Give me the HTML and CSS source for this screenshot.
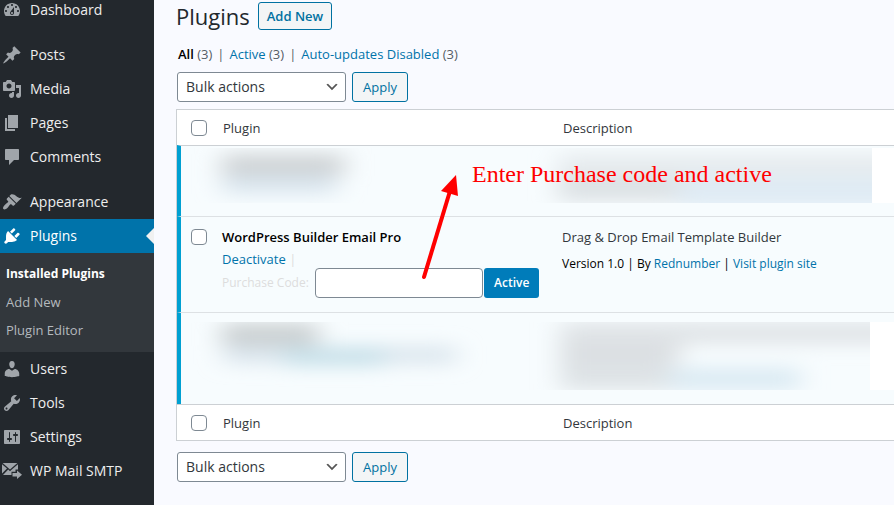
FILE: index.html
```html
<!DOCTYPE html>
<html lang="en">
<head>
<meta charset="utf-8">
<title>Plugins</title>
<link rel="stylesheet" href="styles.css">
</head>
<body>
<div class="admin">
  <nav class="sidebar" aria-label="Main menu">
    <ul class="menu">
      <li><a class="item" href="#"><svg class="icon" viewBox="0 0 20 20"><path d="M3.76 16h12.48c1.1-1.37 1.76-3.11 1.76-5 0-4.42-3.58-8-8-8s-8 3.58-8 8c0 1.89.66 3.63 1.76 5zM10 4c.55 0 1 .45 1 1s-.45 1-1 1-1-.45-1-1 .45-1 1-1zM6 6c.55 0 1 .45 1 1s-.45 1-1 1-1-.45-1-1 .45-1 1-1zm8 0c.55 0 1 .45 1 1s-.45 1-1 1-1-.45-1-1 .45-1 1-1zm-5.37 5.55L12 7v6c0 1.1-.9 2-2 2s-2-.9-2-2c0-.57.24-1.08.63-1.45zM4 10c.55 0 1 .45 1 1s-.45 1-1 1-1-.45-1-1 .45-1 1-1zm12 0c.55 0 1 .45 1 1s-.45 1-1 1-1-.45-1-1 .45-1 1-1zm-5 3c0-.55-.45-1-1-1s-1 .45-1 1 .45 1 1 1 1-.45 1-1z"/></svg>Dashboard</a></li>
      <li class="separator"></li>
      <li><a class="item" href="#"><svg class="icon" viewBox="0 0 20 20"><path d="M10.44 3.02l1.82-1.82 6.36 6.35-1.83 1.82c-1.05-.68-2.48-.57-3.41.36l-.75.75c-.92.93-1.04 2.35-.35 3.41l-1.83 1.82-2.41-2.41-2.8 2.79c-.42.42-3.38 2.71-3.8 2.29s1.86-3.39 2.28-3.81l2.79-2.79L4.1 9.36l1.83-1.82c1.05.69 2.48.57 3.4-.36l.75-.75c.93-.92 1.05-2.35.36-3.41z"/></svg>Posts</a></li>
      <li><a class="item" href="#"><svg class="icon" viewBox="0 0 20 20"><path d="M13 11V4c0-.55-.45-1-1-1h-1.67L9 1H5L3.67 3H2c-.55 0-1 .45-1 1v7c0 .55.45 1 1 1h10c.55 0 1-.45 1-1zM7 4.5c1.38 0 2.5 1.12 2.5 2.5S8.38 9.5 7 9.5 4.5 8.38 4.5 7 5.62 4.5 7 4.5zM14 6h5v10.5c0 1.38-1.12 2.5-2.5 2.5S14 17.88 14 16.5s1.12-2.5 2.5-2.5c.17 0 .34.02.5.05V9h-3V6zm-4 8.05V13h2v3.5c0 1.38-1.12 2.5-2.5 2.5S7 17.88 7 16.5 8.12 14 9.5 14c.17 0 .34.02.5.05z"/></svg>Media</a></li>
      <li><a class="item" href="#"><svg class="icon" viewBox="0 0 20 20"><path d="M6 15V2h10v13H6zm-1 1h8v2H3V5h2v11z"/></svg>Pages</a></li>
      <li><a class="item" href="#"><svg class="icon" viewBox="0 0 20 20"><path d="M4 2h12c.6 0 1 .4 1 1v9c0 .6-.4 1-1 1h-4l-5 5v-5H4c-.6 0-1-.4-1-1V3c0-.6.400-1 1-1z"/></svg>Comments</a></li>
      <li class="separator"></li>
      <li><a class="item" href="#"><svg class="icon" viewBox="0 0 20 20"><path d="M14.48 11.06L7.41 3.99l1.5-1.5c.5-.56 2.3-.47 3.51.32 1.21.8 1.43 1.28 2.91 2.1 1.18.64 2.45 1.26 4.45.85zm-.71.71L6.7 4.7 4.93 6.47c-.39.39-.39 1.02 0 1.41l1.06 1.06c.39.39.39 1.03 0 1.42-.6.6-1.43 1.11-2.21 1.69-.35.26-.7.53-1.01.84C1.43 14.23.4 16.08 1.4 17.07c.99 1 2.84-.03 4.18-1.36.31-.31.58-.66.85-1.02.57-.78 1.08-1.61 1.69-2.21.39-.39 1.02-.39 1.41 0l1.06 1.06c.39.39 1.02.39 1.41 0z"/></svg>Appearance</a></li>
      <li>
        <a class="item current" href="#"><svg class="icon" viewBox="0 0 20 20"><path d="M13.11 4.36L9.87 7.6 8 5.73l3.24-3.24c.35-.34 1.05-.2 1.56.32.52.51.66 1.21.31 1.55zm-8 1.77l.91-1.12 9.01 9.01-1.19.84c-.71.71-2.63 1.16-3.82 1.16H6.14L4.9 17.26c-.59.59-1.54.59-2.12 0-.59-.58-.59-1.53 0-2.12l1.24-1.24v-3.88c0-1.13.4-3.19 1.09-3.89zm7.26 3.97l3.24-3.24c.34-.35 1.04-.21 1.55.31.52.51.66 1.21.31 1.55l-3.24 3.25z"/></svg>Plugins</a>
        <ul class="submenu">
          <li><a class="active" href="#">Installed Plugins</a></li>
          <li><a href="#">Add New</a></li>
          <li><a href="#">Plugin Editor</a></li>
        </ul>
      </li>
      <li><a class="item" href="#"><svg class="icon" viewBox="0 0 20 20"><path d="M10 9.25c-2.27 0-2.73-3.44-2.73-3.44C7 4.02 7.82 2 9.97 2c2.16 0 2.98 2.02 2.71 3.81 0 0-.41 3.44-2.68 3.44zm0 2.57L12.72 10c2.39 0 4.52 2.33 4.52 4.53v2.49s-3.65 1.13-7.24 1.13c-3.65 0-7.24-1.13-7.24-1.13v-2.49c0-2.25 1.94-4.48 4.47-4.48z"/></svg>Users</a></li>
      <li><a class="item" href="#"><svg class="icon" viewBox="0 0 20 20"><path d="M16.68 9.77c-1.34 1.34-3.3 1.67-4.95.99l-5.41 6.52c-.99.99-2.59.99-3.58 0s-.99-2.59 0-3.57l6.52-5.42c-.68-1.65-.35-3.61.99-4.95 1.28-1.28 3.12-1.62 4.72-1.06l-2.89 2.89 2.82 2.82 2.86-2.87c.53 1.58.18 3.39-1.08 4.65zM3.81 16.21c.4.39 1.04.39 1.43 0 .4-.4.4-1.04 0-1.43-.39-.4-1.03-.4-1.43 0-.39.39-.39 1.03 0 1.43z"/></svg>Tools</a></li>
      <li><a class="item" href="#"><svg class="icon" viewBox="0 0 20 20"><path d="M18 16V4c0-.55-.45-1-1-1H3c-.55 0-1 .45-1 1v12c0 .55.45 1 1 1h14c.55 0 1-.45 1-1zM8 11h1c.55 0 1 .45 1 1s-.45 1-1 1H8v1.500c0 .28-.22.5-.5.5s-.5-.22-.5-.5V13H6c-.55 0-1-.45-1-1s.45-1 1-1h1V5.500c0-.28.22-.5.5-.5s.5.22.5.5V11zm5-2h-1c-.55 0-1-.45-1-1s.45-1 1-1h1V5.500c0-.28.22-.5.5-.5s.5.22.5.5V7h1c.55 0 1 .45 1 1s-.45 1-1 1h-1v5.500c0 .28-.22.5-.5.5s-.5-.22-.5-.5V9z"/></svg>Settings</a></li>
      <li><a class="item" href="#"><svg class="icon" viewBox="0 0 20 20"><path d="M.6 2h14.800L8 8.600zM0 3.200l5 4.400-5 4.800zM16 3.200v5.300h-2.500v2.200H9.500V14H1l5.200-5.400L8 10.200l1.800-1.600zM10.500 12H15V9.500l5 4.200-5 4.300v-2.500h-4.500z"/></svg>WP Mail SMTP</a></li>
    </ul>
  </nav>

  <main class="content">
    <header class="heading">
      <h1>Plugins</h1>
      <a class="add-new" href="#">Add New</a>
    </header>

    <ul class="filters">
      <li><a class="selected" href="#">All</a> (3)</li>
      <li><a href="#">Active</a> (3)</li>
      <li><a href="#">Auto-updates Disabled</a> (3)</li>
    </ul>

    <div class="bulk">
      <select aria-label="Bulk actions"><option>Bulk actions</option></select>
      <button class="apply" type="button">Apply</button>
    </div>

    <div class="listing">
      <table>
        <colgroup><col class="col-check"><col class="col-name"><col></colgroup>
        <thead>
          <tr><th><input type="checkbox" aria-label="Select all"></th><th scope="col">Plugin</th><th scope="col">Description</th></tr>
        </thead>
        <tbody>
          <tr>
            <td class="hidden-cell" colspan="3">
              <svg class="smudge first" aria-hidden="true">
                <defs><filter id="soft" x="-40%" y="-100%" width="180%" height="300%"><feGaussianBlur stdDeviation="13 9"/></filter></defs>
                <g filter="url(#soft)">
                  <rect x="32" y="6" width="122" height="22" fill="#cfd3d5"/>
                  <rect x="32" y="28" width="115" height="18" fill="#dae6ef"/>
                  <rect x="368" y="5" width="370" height="23" fill="#e7ecef"/>
                  <rect x="368" y="28" width="120" height="25" fill="#dce1e4"/>
                  <rect x="488" y="28" width="250" height="32" fill="#dfebf4"/>
                </g>
                <rect class="blank" x="682" width="100%" height="100%"/>
              </svg>
            </td>
          </tr>
          <tr class="plugin">
            <td><input type="checkbox" aria-label="Select WordPress Builder Email Pro"></td>
            <td>
              <strong>WordPress Builder Email Pro</strong>
              <div class="actions"><a href="#">Deactivate</a> |</div>
              <div class="license">
                <label for="code">Purchase Code:</label>
                <input id="code" type="text">
                <button type="button">Active</button>
              </div>
            </td>
            <td class="about">
              <p>Drag &amp; Drop Email Template Builder</p>
              <p class="meta">Version 1.0 | By <a href="#">Rednumber</a> | <a href="#">Visit plugin site</a></p>
            </td>
          </tr>
          <tr>
            <td class="hidden-cell" colspan="3">
              <svg class="smudge last" aria-hidden="true">
                <g filter="url(#soft)">
                  <rect x="32" y="1" width="96" height="23" fill="#cbd0d2"/>
                  <rect x="34" y="24" width="232" height="18" fill="#dbe6ee"/>
                  <rect x="94" y="26" width="100" height="18" fill="#c6e0e9"/>
                  <rect x="370" y="0" width="350" height="22" fill="#e0e4e7"/>
                  <rect x="370" y="20" width="120" height="22" fill="#dbdfe2"/>
                  <rect x="370" y="42" width="110" height="26" fill="#dee3e6"/>
                  <rect x="480" y="46" width="130" height="22" fill="#daeaf3"/>
                </g>
                <rect class="blank" x="680" width="100%" height="100%"/>
              </svg>
            </td>
          </tr>
        </tbody>
        <tfoot>
          <tr><th><input type="checkbox" aria-label="Select all"></th><th scope="col">Plugin</th><th scope="col">Description</th></tr>
        </tfoot>
      </table>
      <div class="note">
        <svg class="arrow" viewBox="0 0 40 106" aria-hidden="true"><path d="M4 102L30 16" stroke="#f00" stroke-width="4" stroke-linecap="round"/><path d="M36 0L38 21 21 16z" fill="#f00"/></svg>
        <span>Enter Purchase code and active</span>
      </div>
    </div>

    <div class="bulk">
      <select aria-label="Bulk actions"><option>Bulk actions</option></select>
      <button class="apply" type="button">Apply</button>
    </div>
  </main>
</div>
</body>
</html>
```
FILE: styles.css
```css
* { box-sizing: border-box; }

body {
  margin: 0;
  overflow: hidden;
  background: #f9faff;
  color: #32373c;
  font: 13px/20px "Segoe UI", "Open Sans", "Noto Sans", sans-serif;
}

a { color: #0073aa; text-decoration: none; }
ul { margin: 0; padding: 0; list-style: none; }
input, select, button { font: inherit; }

.admin { display: flex; min-height: 100vh; }

.sidebar { flex: 0 0 154px; background: #23282d; }
.menu { margin-top: -7px; font-size: 14px; }
.separator { height: 11px; }

.item {
  position: relative;
  display: flex;
  align-items: center;
  gap: 8px;
  height: 34px;
  padding-left: 2px;
  color: #eee;
}
.icon { width: 20px; height: 20px; fill: #a0a5aa; }
.current { background: #0073aa; color: #fff; }
.current .icon { fill: #fff; }
.current::after {
  content: "";
  position: absolute;
  right: 0;
  border: 8px solid transparent;
  border-left: 0;
  border-right-color: #f1f1f1;
}

.submenu { padding: 7px 0 8px; background: #32373c; font-size: 13px; }
.submenu a { display: block; padding: 4px 6px; color: #b4b9be; }
.submenu .active { color: #fff; font-size: 12px; font-weight: 700; }

.content { flex: 1; min-width: 0; padding: 2px 0 0 22px; }

.heading { display: flex; align-items: center; gap: 8px; height: 27px; }
h1 { margin: 0; color: #23282d; font-size: 22px; font-weight: 400; line-height: 28px; }
.add-new {
  padding: 3px 8px;
  border: 1px solid #0071a1;
  border-radius: 3px;
  background: #f3f5f6;
  color: #0071a1;
  font-weight: 600;
}

.filters { display: flex; margin: 15px 0 8px; padding-left: 2px; color: #555d66; }
.filters li + li::before { content: "|"; margin: 0 5px; }
.filters .selected { color: #000; font-weight: 600; }

.bulk { display: flex; gap: 6px; padding-left: 1px; }
select {
  width: 169px;
  height: 30px;
  padding: 0 8px;
  border: 1px solid #7e8993;
  border-radius: 3px;
  appearance: none;
  background: #fff url("data:image/svg+xml,%3Csvg xmlns='http://www.w3.org/2000/svg' viewBox='0 0 20 20'%3E%3Cpath d='M5 6l5 5 5-5 2 1-7 7-7-7z' fill='%23555'/%3E%3C/svg%3E") no-repeat right 5px center / 16px;
  color: #32373c;
  font-size: 14px;
}
.apply {
  height: 30px;
  padding: 0 10px;
  border: 1px solid #0071a1;
  border-radius: 3px;
  background: #f3f5f6;
  color: #0071a1;
}

.listing { position: relative; margin: 7px 0 11px; }
table {
  width: 100%;
  border: 1px solid #ccd0d4;
  border-right: 0;
  border-spacing: 0;
  table-layout: fixed;
  background: #fff;
}
.col-check { width: 36px; }
.col-name { width: 340px; }
th { height: 35px; padding: 0 10px; font-weight: 400; text-align: left; font-size: 13px; }
th:first-child { padding: 0 0 0 14px; }
td { padding: 10px 9px; vertical-align: top; }
tbody td { background: #f7fcfe; border-top: 1px solid #dde1e4; }
tbody tr:first-child td { border-top-color: #ccd0d4; }
tbody td:first-child { padding: 12px 0 0 10px; border-left: 4px solid #00a0d2; }
tfoot th { border-top: 1px solid #ccd0d4; height: 36px; }

input[type="checkbox"] {
  display: block;
  width: 16px;
  height: 16px;
  margin: 0;
  border: 1px solid #7e8993;
  border-radius: 4px;
  appearance: none;
  background: #fff;
}

strong { display: block; color: #000; font-weight: 600; }
.actions { margin-top: 2px; color: #ddd; }
.license { display: flex; align-items: center; gap: 1px; margin-top: -1px; color: #ddd; white-space: nowrap; }
.license label { flex: 0 0 92px; font-size: 12px; }
.license input {
  width: 168px;
  height: 30px;
  padding: 0 8px;
  border: 1px solid #7e8993;
  border-radius: 4px;
  background: #fff;
}
.license button {
  height: 30px;
  padding: 0 10px;
  border: 0;
  border-radius: 3px;
  background: #007cba;
  color: #fff;
  font-size: 12px;
  font-weight: 600;
}
.plugin td { height: 96px; }
.about p { margin: 0 0 7px; }
.about .meta { color: #000; font-size: 12px; }

tbody .hidden-cell:first-child { padding: 2px 0 13px 9px; }
tbody tr:last-child .hidden-cell { padding: 9px 0 14px 9px; }
.smudge { display: block; width: 100%; overflow: hidden; }
.first { height: 55px; }
.last { height: 68px; }
.blank { fill: #fff; }

.note {
  position: absolute;
  top: 66px;
  left: 244px;
  display: flex;
  gap: 12px;
  color: #f00;
  font: 24px/26px "Liberation Serif", serif;
  pointer-events: none;
}
.note span { margin-top: -14px; white-space: nowrap; }
.arrow { width: 40px; height: 106px; fill: none; }
```
